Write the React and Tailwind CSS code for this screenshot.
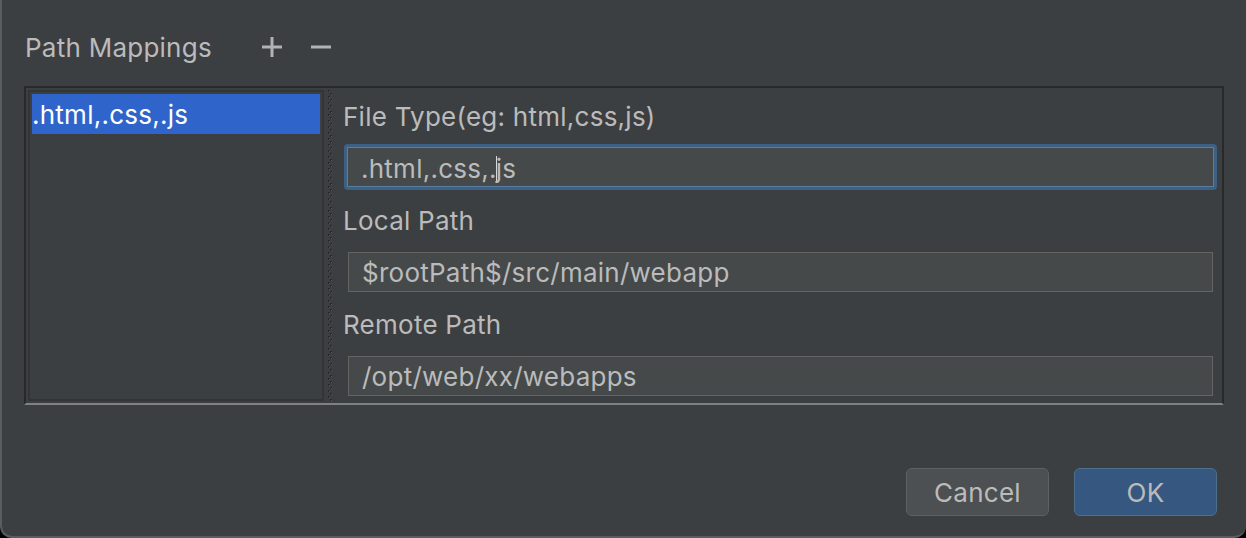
import React from 'react';

const Splitter = () => (
    <div className="w-[9px] shrink-0 flex justify-center py-[2px]">
        <svg width="5" height="100%" className="h-full">
            <defs>
                <pattern id="grip" width="5" height="6" patternUnits="userSpaceOnUse">
                    <rect x="0" y="0" width="2" height="2" fill="#27292a" />
                    <rect x="2" y="3" width="2" height="2" fill="#27292a" />
                    <rect x="1" y="1" width="1" height="1" fill="#55585a" />
                    <rect x="3" y="4" width="1" height="1" fill="#55585a" />
                </pattern>
            </defs>
            <rect x="0" y="0" width="5" height="100%" fill="url(#grip)" />
        </svg>
    </div>
);

const Field = ({ label, value, focused, gap }) => (
    <div className="flex flex-col">
        <div className={`h-[32px] flex items-center leading-none ${gap}`}>{label}</div>
        {focused ? (
            <div className="mt-[11px] ml-[1px] mr-[5px] p-[3px] rounded-[4px] bg-[#3d6185]">
                <div className="h-[40px] border border-[#5a7ea3] bg-[#45494a] flex items-center pl-[13px] pt-[3px] text-[#bbbbbb]">
                    <span>.html,.css,.</span>
                    <span className="inline-block w-[1px] h-[26px] bg-[#d8d8d8] -mx-[1px]" />
                    <span>js</span>
                </div>
            </div>
        ) : (
            <div className="mt-[15px] ml-[5px] mr-[9px] h-[40px] border border-[#646464] bg-[#45494a] flex items-center pl-[13px] text-[#bbbbbb]">
                {value}
            </div>
        )}
    </div>
);

export default function App() {
    return (
        <div className="w-[1246px] h-[538px] bg-black font-['Inter','Liberation_Sans',sans-serif] text-[26px] tracking-[0.25px] text-[#bbbbbb]">
            <div className="h-full flex flex-col bg-[#3c3f41] border-l-2 border-b-2 border-[#5a5c5e] rounded-b-[12px] pl-[22px] pr-[22px]">
                <div className="mt-[30px] h-[34px] flex items-center">
                    <span className="ml-[1px]">Path Mappings</span>
                    <svg className="ml-[50px]" width="20" height="20" viewBox="0 0 20 20">
                        <path d="M10 0v20M0 10h20" stroke="#b0b2b4" strokeWidth="3" />
                    </svg>
                    <svg className="ml-[29px]" width="20" height="20" viewBox="0 0 20 20">
                        <path d="M0 10h20" stroke="#b0b2b4" strokeWidth="3" />
                    </svg>
                </div>

                <div className="mt-[22px] h-[319px] flex border-l-2 border-t-2 border-r-2 border-[#27292a] border-b-2 border-b-[#7f8183]">
                    <div className="w-[300px] shrink-0 p-[2px]">
                        <div className="h-full border-2 border-[#323436] p-[2px]">
                            <div className="h-[40px] bg-[#2f65ca] text-white flex items-center">.html,.css,.js</div>
                        </div>
                    </div>
                    <Splitter />
                    <div className="flex-1 flex flex-col pl-[8px] pt-[13px]">
                        <Field gap="" label="File Type(eg: html,css,js)" focused />
                        <Field gap="mt-[15px]" label="Local Path" value="$rootPath$/src/main/webapp" />
                        <Field gap="mt-[17px]" label="Remote Path" value="/opt/web/xx/webapps" />
                    </div>
                </div>

                <div className="mt-[63px] flex justify-end gap-[25px] pr-[7px]">
                    <button className="w-[143px] h-[48px] rounded-[6px] bg-[#4c5052] border border-[#5e6163] text-[#bbbbbb]">Cancel</button>
                    <button className="w-[143px] h-[48px] rounded-[6px] bg-[#365880] border border-[#4c708c] text-[#bbbbbb]">OK</button>
                </div>
            </div>
        </div>
    );
}
